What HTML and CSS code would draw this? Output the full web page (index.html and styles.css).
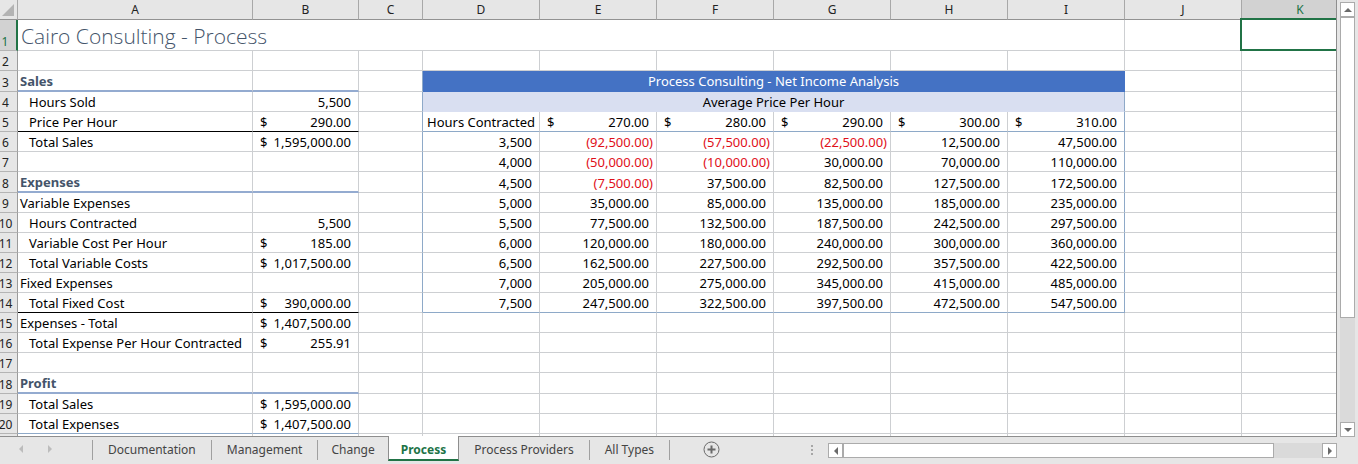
FILE: index.html
```html
<!DOCTYPE html>
<html lang="en">
<head>
<meta charset="utf-8">
<title>Cairo Consulting - Process</title>
<link rel="stylesheet" href="styles.css">
</head>
<body>
<div class="workbook">
  <main class="sheet">
    <table class="grid">
      <colgroup>
        <col class="col-head"><col class="col-a"><col class="col-b"><col class="col-c">
        <col class="col-n"><col class="col-n"><col class="col-n"><col class="col-n"><col class="col-n"><col class="col-n"><col class="col-n"><col class="col-n">
      </colgroup>
      <thead>
        <tr><th class="corner"><svg class="corner-mark" viewBox="0 0 12 12" aria-hidden="true"><path d="M12 0V12H0Z"/></svg></th><th>A</th><th>B</th><th>C</th><th>D</th><th>E</th><th>F</th><th>G</th><th>H</th><th>I</th><th>J</th><th class="picked-col">K</th></tr>
      </thead>
      <tbody>
        <tr class="tall"><th class="picked-row">1</th><td colspan="9" class="title">Cairo Consulting - Process</td><td></td><td class="cursor"></td></tr>
        <tr><th>2</th><td></td><td></td><td></td><td></td><td></td><td></td><td></td><td></td><td></td><td></td><td></td></tr>
        <tr class="section"><th>3</th><td class="heading">Sales</td><td class="heading"></td><td class="edge"></td><td colspan="6" class="band">Process Consulting - Net Income Analysis</td><td></td><td></td></tr>
        <tr><th>4</th><td class="sub">Hours Sold</td><td class="num">5,500</td><td class="edge"></td><td colspan="6" class="band-light">Average Price Per Hour</td><td></td><td></td></tr>
        <tr><th>5</th><td class="sub rule">Price Per Hour</td><td class="rule"><div class="money"><span>$</span><span>290.00</span></div></td><td class="edge"></td><td class="center line">Hours Contracted</td><td class="line"><div class="money"><span>$</span><span>270.00</span></div></td><td class="line"><div class="money"><span>$</span><span>280.00</span></div></td><td class="line"><div class="money"><span>$</span><span>290.00</span></div></td><td class="line"><div class="money"><span>$</span><span>300.00</span></div></td><td class="line edge"><div class="money"><span>$</span><span>310.00</span></div></td><td></td><td></td></tr>
        <tr><th>6</th><td class="sub">Total Sales</td><td><div class="money"><span>$</span><span>1,595,000.00</span></div></td><td class="edge"></td><td class="num">3,500</td><td class="num neg">(92,500.00)</td><td class="num neg">(57,500.00)</td><td class="num neg">(22,500.00)</td><td class="num">12,500.00</td><td class="num edge">47,500.00</td><td></td><td></td></tr>
        <tr><th>7</th><td></td><td></td><td class="edge"></td><td class="num">4,000</td><td class="num neg">(50,000.00)</td><td class="num neg">(10,000.00)</td><td class="num">30,000.00</td><td class="num">70,000.00</td><td class="num edge">110,000.00</td><td></td><td></td></tr>
        <tr class="section"><th>8</th><td class="heading">Expenses</td><td class="heading"></td><td class="edge"></td><td class="num">4,500</td><td class="num neg">(7,500.00)</td><td class="num">37,500.00</td><td class="num">82,500.00</td><td class="num">127,500.00</td><td class="num edge">172,500.00</td><td></td><td></td></tr>
        <tr><th>9</th><td>Variable Expenses</td><td></td><td class="edge"></td><td class="num">5,000</td><td class="num">35,000.00</td><td class="num">85,000.00</td><td class="num">135,000.00</td><td class="num">185,000.00</td><td class="num edge">235,000.00</td><td></td><td></td></tr>
        <tr><th>10</th><td class="sub">Hours Contracted</td><td class="num">5,500</td><td class="edge"></td><td class="num">5,500</td><td class="num">77,500.00</td><td class="num">132,500.00</td><td class="num">187,500.00</td><td class="num">242,500.00</td><td class="num edge">297,500.00</td><td></td><td></td></tr>
        <tr><th>11</th><td class="sub">Variable Cost Per Hour</td><td><div class="money"><span>$</span><span>185.00</span></div></td><td class="edge"></td><td class="num">6,000</td><td class="num">120,000.00</td><td class="num">180,000.00</td><td class="num">240,000.00</td><td class="num">300,000.00</td><td class="num edge">360,000.00</td><td></td><td></td></tr>
        <tr><th>12</th><td class="sub">Total Variable Costs</td><td><div class="money"><span>$</span><span>1,017,500.00</span></div></td><td class="edge"></td><td class="num">6,500</td><td class="num">162,500.00</td><td class="num">227,500.00</td><td class="num">292,500.00</td><td class="num">357,500.00</td><td class="num edge">422,500.00</td><td></td><td></td></tr>
        <tr><th>13</th><td>Fixed Expenses</td><td></td><td class="edge"></td><td class="num">7,000</td><td class="num">205,000.00</td><td class="num">275,000.00</td><td class="num">345,000.00</td><td class="num">415,000.00</td><td class="num edge">485,000.00</td><td></td><td></td></tr>
        <tr><th>14</th><td class="sub rule">Total Fixed Cost</td><td class="rule"><div class="money"><span>$</span><span>390,000.00</span></div></td><td class="edge"></td><td class="num line">7,500</td><td class="num line">247,500.00</td><td class="num line">322,500.00</td><td class="num line">397,500.00</td><td class="num line">472,500.00</td><td class="num line edge">547,500.00</td><td></td><td></td></tr>
        <tr><th>15</th><td>Expenses - Total</td><td><div class="money"><span>$</span><span>1,407,500.00</span></div></td><td></td><td></td><td></td><td></td><td></td><td></td><td></td><td></td><td></td></tr>
        <tr><th>16</th><td class="sub">Total Expense Per Hour Contracted</td><td><div class="money"><span>$</span><span>255.91</span></div></td><td></td><td></td><td></td><td></td><td></td><td></td><td></td><td></td><td></td></tr>
        <tr><th>17</th><td></td><td></td><td></td><td></td><td></td><td></td><td></td><td></td><td></td><td></td><td></td></tr>
        <tr class="section"><th>18</th><td class="heading">Profit</td><td class="heading"></td><td></td><td></td><td></td><td></td><td></td><td></td><td></td><td></td><td></td></tr>
        <tr><th>19</th><td class="sub">Total Sales</td><td><div class="money"><span>$</span><span>1,595,000.00</span></div></td><td></td><td></td><td></td><td></td><td></td><td></td><td></td><td></td><td></td></tr>
        <tr><th>20</th><td class="sub line">Total Expenses</td><td class="line"><div class="money"><span>$</span><span>1,407,500.00</span></div></td><td></td><td></td><td></td><td></td><td></td><td></td><td></td><td></td><td></td></tr>
        <tr><th></th><td></td><td></td><td></td><td></td><td></td><td></td><td></td><td></td><td></td><td></td><td></td></tr>
      </tbody>
    </table>
  </main>
  <div class="vscroll">
    <button class="arrow" aria-label="Scroll up"><svg viewBox="0 0 8 4"><path d="M4 0L8 4H0Z"/></svg></button>
    <div class="vthumb"></div>
    <div class="vtrack"></div>
    <button class="arrow" aria-label="Scroll down"><svg viewBox="0 0 8 4"><path d="M0 0H8L4 4Z"/></svg></button>
  </div>
</div>
<footer class="bar">
  <div class="nav">
    <button class="step" aria-label="Previous sheet"><svg viewBox="0 0 4 8"><path d="M4 0V8L0 4Z"/></svg></button>
    <button class="step" aria-label="Next sheet"><svg viewBox="0 0 4 8"><path d="M0 0L4 4L0 8Z"/></svg></button>
  </div>
  <nav class="tabs">
    <button class="tab">Documentation</button>
    <button class="tab">Management</button>
    <button class="tab before">Change</button>
    <button class="tab active">Process</button>
    <button class="tab">Process Providers</button>
    <button class="tab">All Types</button>
  </nav>
  <button class="add" aria-label="New sheet"><svg viewBox="0 0 17 17"><circle cx="8.5" cy="8.5" r="7.5"/><path d="M8.5 4.5V12.5M4.5 8.5H12.5"/></svg></button>
  <div class="dots"><i></i><i></i><i></i></div>
  <div class="hscroll">
    <button class="arrow" aria-label="Scroll left"><svg class="side" viewBox="0 0 4 8"><path d="M4 0V8L0 4Z"/></svg></button>
    <div class="hthumb"></div>
    <div class="htrack"></div>
    <button class="arrow" aria-label="Scroll right"><svg class="side" viewBox="0 0 4 8"><path d="M0 0L4 4L0 8Z"/></svg></button>
  </div>
</footer>
</body>
</html>
```
FILE: styles.css
```css
* { box-sizing: border-box; }

body {
  margin: 0;
  height: 100vh;
  display: flex;
  flex-direction: column;
  overflow: hidden;
  background: #e6e6e6;
  color: #000;
  font: 13px/17px "Noto Sans", "Open Sans", sans-serif;
}

button {
  margin: 0;
  padding: 0;
  border: 0;
  background: none;
  color: inherit;
  font: inherit;
}

svg { display: block; }

.workbook {
  flex: 1;
  min-height: 0;
  display: flex;
}

.sheet {
  flex: 1;
  min-width: 0;
  overflow: hidden;
  background: #fff;
  border-right: 1px solid #8e8e8e;
  border-bottom: 1px solid #8e8e8e;
}

/* Row numbers are partly scrolled out on the left */
.grid {
  width: 1365px;
  margin-left: -6px;
  table-layout: fixed;
  border-collapse: separate;
  border-spacing: 0;
}

.col-head { width: 24px; }
.col-a { width: 235px; }
.col-b { width: 106px; }
.col-c { width: 64px; }
.col-n { width: 117px; }

.grid tr { height: 20px; }
.grid .tall { height: 31px; }
.grid .section { height: 21px; }

th {
  padding: 0;
  font-size: 12px;
  font-weight: 400;
  color: #222;
  background: #e6e6e6;
  border-right: 1px solid #9b9b9b;
  border-bottom: 1px solid #b4b4b4;
}

tbody th { padding-top: 2px; }

thead th { border-right-color: #a8a8a8; border-bottom-color: #929292; }

.corner-mark {
  width: 12px;
  height: 12px;
  margin-left: 8px;
  fill: #b3b3b3;
}

.picked-row {
  vertical-align: bottom;
  color: #217346;
  background: #d2d2d2;
  border-right: 2px solid #217346;
}

.picked-col {
  color: #217346;
  background: #d2d2d2;
}

td {
  padding: 2px 2px 0;
  border-right: 1px solid #cdcfd2;
  border-bottom: 1px solid #cdcfd2;
  white-space: nowrap;
}

.title {
  padding: 2px 3px 0;
  font: 300 21px/28px "Open Sans", "Noto Sans", sans-serif;
  color: #44546a;
}

.cursor { position: relative; }

.cursor::after {
  content: "";
  position: absolute;
  inset: -2px 0 -1px -2px;
  border: 2px solid #217346;
}

.heading {
  font-weight: 700;
  color: #44546a;
  border-bottom: 2px solid #94abd0;
}

.sub { padding-left: 11px; }
.center { text-align: center; }
.num { text-align: right; padding-right: 7px; }
.neg { padding-right: 3px; color: #e0101a; }

.money {
  display: flex;
  justify-content: space-between;
  padding: 0 5px;
}

.band {
  padding-top: 0;
  text-align: center;
  color: #fff;
  background: #4472c4;
  border-color: #4472c4;
}

.band-light {
  text-align: center;
  background: #d9dff1;
  border-color: #d9dff1;
  border-right-color: #8ea9c8;
}

.rule { border-bottom-color: #000; }
.line { border-bottom-color: #8ea9c8; }
.edge { border-right-color: #8ea9c8; }

.vscroll {
  width: 21px;
  padding: 2px 3px 0;
  display: flex;
  flex-direction: column;
}

.arrow {
  width: 15px;
  height: 15px;
  flex: none;
  display: flex;
  align-items: center;
  justify-content: center;
  background: #fff;
  border: 1px solid #ababab;
}

.arrow svg { width: 8px; height: 4px; fill: #6a6a6a; }
.arrow .side { width: 4px; height: 8px; }

.vthumb {
  flex: 300;
  background: #fff;
  border: 1px solid #ababab;
}

.vtrack { flex: 105; background: #dadada; }

.bar {
  height: 27px;
  flex: none;
  display: flex;
  align-items: flex-start;
  color: #444;
}

.nav {
  width: 92px;
  height: 24px;
  padding-left: 19px;
  display: flex;
  align-items: center;
  gap: 25px;
}

.step svg { width: 4px; height: 8px; fill: #bcbcbc; }

.tabs { display: flex; font-size: 12px; }

.tab {
  height: 20px;
  margin-top: 3px;
  padding: 0 15px 2px;
  border-right: 1px solid #a0a0a0;
}

.tab:first-child { border-left: 1px solid #a0a0a0; }
.tab.before { padding: 0 13px 2px; border-right: 0; }

.tab.active {
  position: relative;
  height: 25px;
  margin-top: -1px;
  padding: 4px 12px 0;
  font-weight: 700;
  color: #217346;
  background: #fff;
  border-right: 1px solid #8e8e8e;
  border-left: 1px solid #8e8e8e;
  border-bottom: 2px solid #217346;
}

.add { margin: 4px 0 0 33px; }

.add svg {
  width: 17px;
  height: 17px;
  fill: none;
  stroke: #6a6a6a;
}

.add path { stroke-width: 2; }

.dots {
  margin: 8px 15px 0 auto;
  display: grid;
  gap: 2px;
}

.dots i { width: 2px; height: 2px; background: #a6a6a6; }

.hscroll {
  width: 509px;
  margin: 6px 21px 0 0;
  display: flex;
}

.hthumb {
  flex: 431;
  background: #fff;
  border: 1px solid #ababab;
}

.htrack { flex: 48; background: #dadada; }
```
